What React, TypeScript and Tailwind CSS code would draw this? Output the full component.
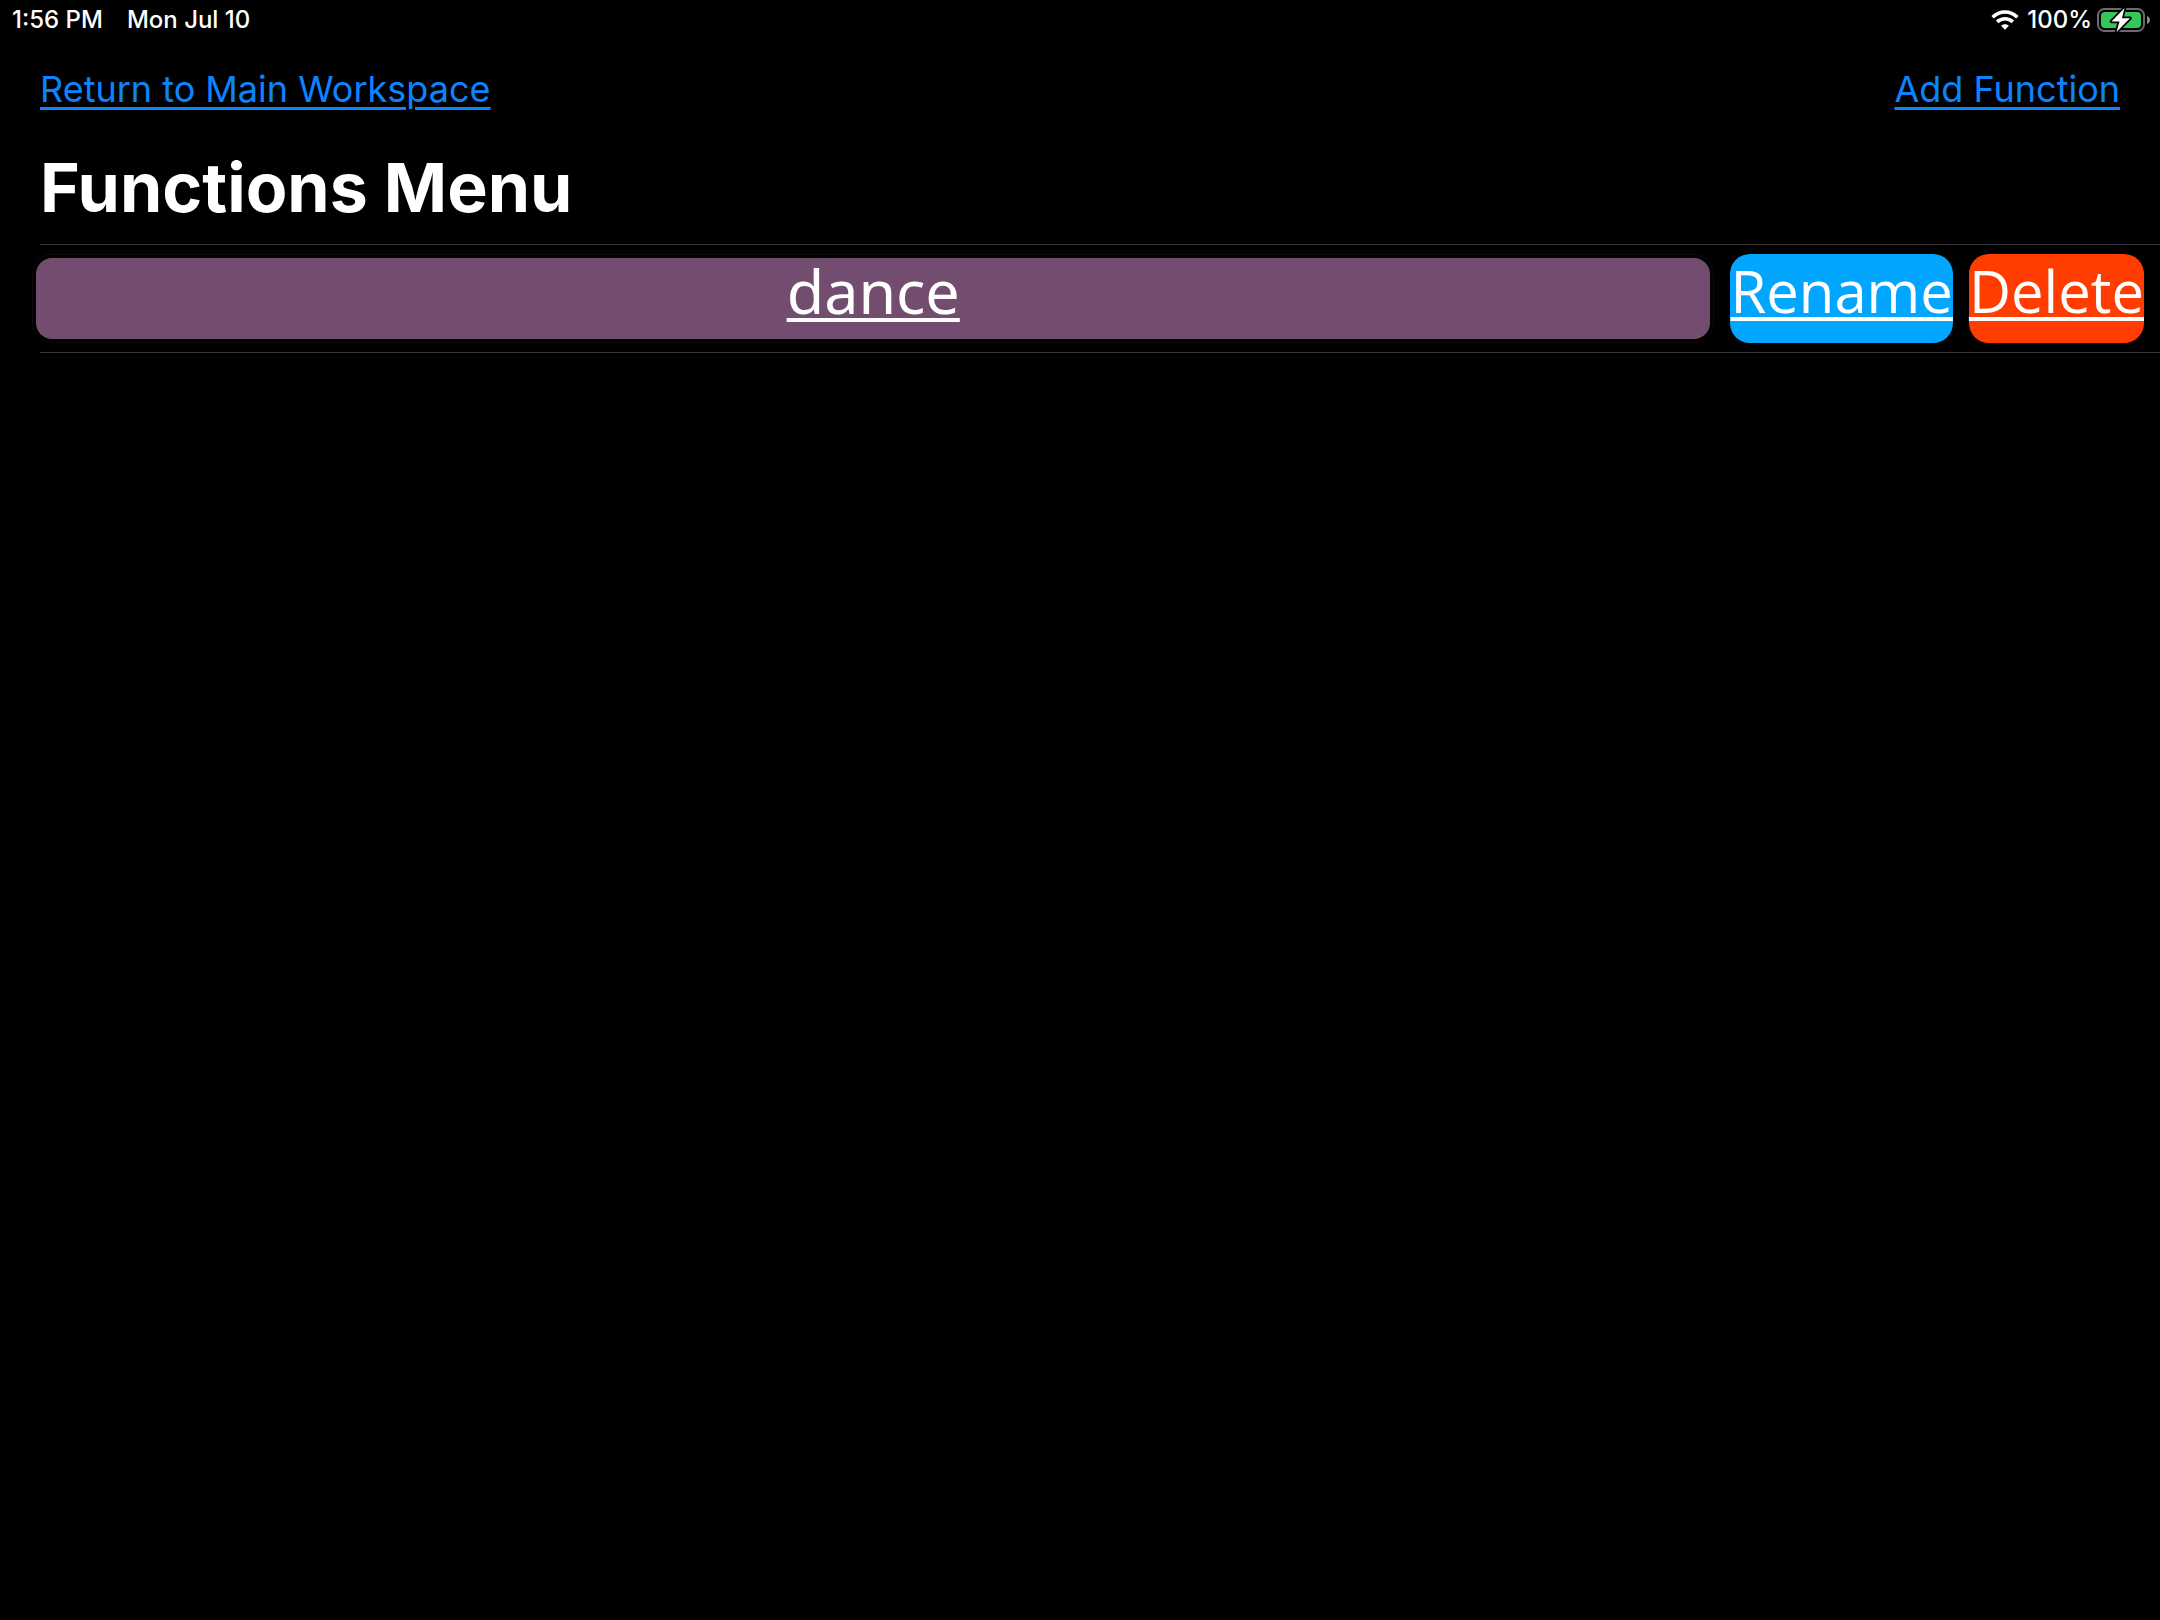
import React from "react";

const functions = [{ id: "dance", name: "dance" }];

function WifiIcon() {
  return (
    <svg aria-hidden="true" width="28" height="20" viewBox="0 0 28 20" fill="none" stroke="#fff" strokeWidth="3.6">
      <path d="M1.6 7.2C8.6 .2 19.4 .2 26.4 7.2" />
      <path d="M6.2 11.9c4.4-4.3 11.2-4.3 15.6 0" />
      <path d="M14 19.8l-3.9-4c2.100-2 5.700-2 7.800 0z" fill="#fff" stroke="none" />
    </svg>
  );
}

function BatteryIcon() {
  return (
    <svg aria-hidden="true" width="53" height="26" viewBox="0 0 53 26">
      <rect x="1" y="2" width="46" height="22" rx="6.5" fill="none" stroke="#6b6b6d" strokeWidth="2" />
      <path d="M50 9c4 1.200 4 6.800 0 8z" fill="#8a8a8c" />
      <rect x="4" y="5" width="40" height="16" rx="4" fill="#34c759" />
      <path
        d="M27.500 1L14.500 14.500h8L19.500 25 33 11.200h-8z"
        fill="#fff"
        stroke="#000"
        strokeWidth="3.500"
        strokeLinejoin="round"
        paintOrder="stroke"
      />
    </svg>
  );
}

function StatusBar() {
  return (
    <header className="flex h-10 items-center justify-between pr-2.5 pl-3 text-[24px] leading-10 font-medium">
      <div className="flex gap-6">
        <span>1:56 PM</span>
        <span>Mon Jul 10</span>
      </div>
      <div className="flex items-center">
        <WifiIcon />
        <span className="mr-[5px] ml-2">100%</span>
        <BatteryIcon />
      </div>
    </header>
  );
}

const linkStyle =
  "text-[36px] leading-[44px] text-[#0a84ff] underline decoration-[3px] underline-offset-[5px]";
const actionStyle =
  "h-[89px] rounded-[20px] pb-4 font-['Open_Sans',sans-serif] text-[58px] leading-[72px] underline decoration-[4px] underline-offset-[4px]";

export default function App() {
  return (
    <div className="min-h-screen bg-black font-['Inter',sans-serif] text-white">
      <StatusBar />
      <nav className="flex justify-between px-10 pt-[27px]">
        <a href="#workspace" className={linkStyle}>
          Return to Main Workspace
        </a>
        <a href="#add" className={linkStyle}>
          Add Function
        </a>
      </nav>
      <main>
        <h1 className="px-10 pt-9 pb-[17px] text-[68px] leading-[80px] font-bold">Functions Menu</h1>
        <ul>
          <li aria-hidden="true" className="ml-10 h-px bg-[#38383a]" />
          {functions.map((fn) => (
            <li key={fn.id}>
              <div className="flex items-center gap-4 py-[9px] pr-4 pl-8">
                <div className="flex-1 rounded-[20px] border border-[#0f0a0e] p-[3px]">
                  <button className="block h-[81px] w-full rounded-2xl bg-[#724d6f] pb-4 font-['Noto_Sans',sans-serif] text-[61px] leading-[64px] underline decoration-[4px] underline-offset-[4px]">
                    {fn.name}
                  </button>
                </div>
                <button className={`${actionStyle} bg-[#02a6ff]`}>Rename</button>
                <button className={`${actionStyle} bg-[#ff3d00]`}>Delete</button>
              </div>
              <div className="ml-10 h-px bg-[#38383a]" />
            </li>
          ))}
        </ul>
      </main>
    </div>
  );
}
